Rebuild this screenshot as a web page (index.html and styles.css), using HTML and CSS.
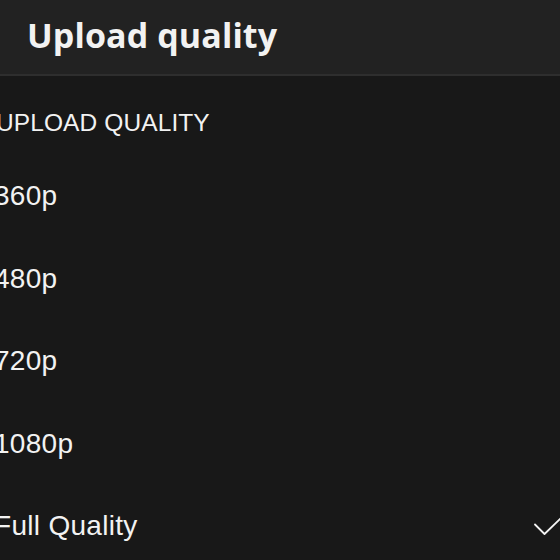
FILE: index.html
```html
<!DOCTYPE html>
<html lang="en">
<head>
  <meta charset="UTF-8" />
  <meta name="viewport" content="width=device-width, initial-scale=1.0" />
  <title>Upload quality</title>
  <link rel="stylesheet" href="styles.css">
</head>
<body>
  <header class="top-bar">
    <h1 class="top-bar-title">Upload quality</h1>
  </header>
  <main class="settings">
    <h2 class="section-label">UPLOAD QUALITY</h2>
    <ul class="option-list">
      <li class="option">360p</li>
      <li class="option">480p</li>
      <li class="option">720p</li>
      <li class="option">1080p</li>
      <li class="option is-selected">
        <span>Full Quality</span>
        <svg class="check" width="30" height="22" viewBox="0 0 30 22" aria-hidden="true">
          <polyline points="1,7.5 10.5,17 29,-1" fill="none" stroke="#f2f2f2" stroke-width="1.8" stroke-linecap="round" stroke-linejoin="round"/>
        </svg>
      </li>
    </ul>
  </main>
</body>
</html>
```

FILE: styles.css
```css
*,*::before,*::after{box-sizing:border-box;margin:0;padding:0}
:root{--bg:#181818;--bar:#222222;--line:#2e2e2e;--text:#f2f2f2}
html,body{width:560px;height:560px;overflow:hidden}
body{background:var(--bg);color:var(--text);font-family:'Liberation Sans',Arial,sans-serif}
.top-bar{height:76px;background:var(--bar);border-bottom:2px solid var(--line);display:flex;align-items:center;padding:0 0 5px 27px}
.top-bar-title{font-family:'Open Sans',sans-serif;font-weight:700;font-size:34px;letter-spacing:.1px;line-height:1}
.settings{margin-left:-4px}
.section-label{font-size:24.5px;font-weight:400;letter-spacing:.1px;line-height:1;padding-top:35px;height:80px}
.option-list{list-style:none;margin-left:-2px}
.option{height:82.5px;display:flex;align-items:center;justify-content:space-between;font-size:28px;letter-spacing:.3px;line-height:1;padding-bottom:2px}
.check{margin-right:-4px;margin-top:4px}
```
